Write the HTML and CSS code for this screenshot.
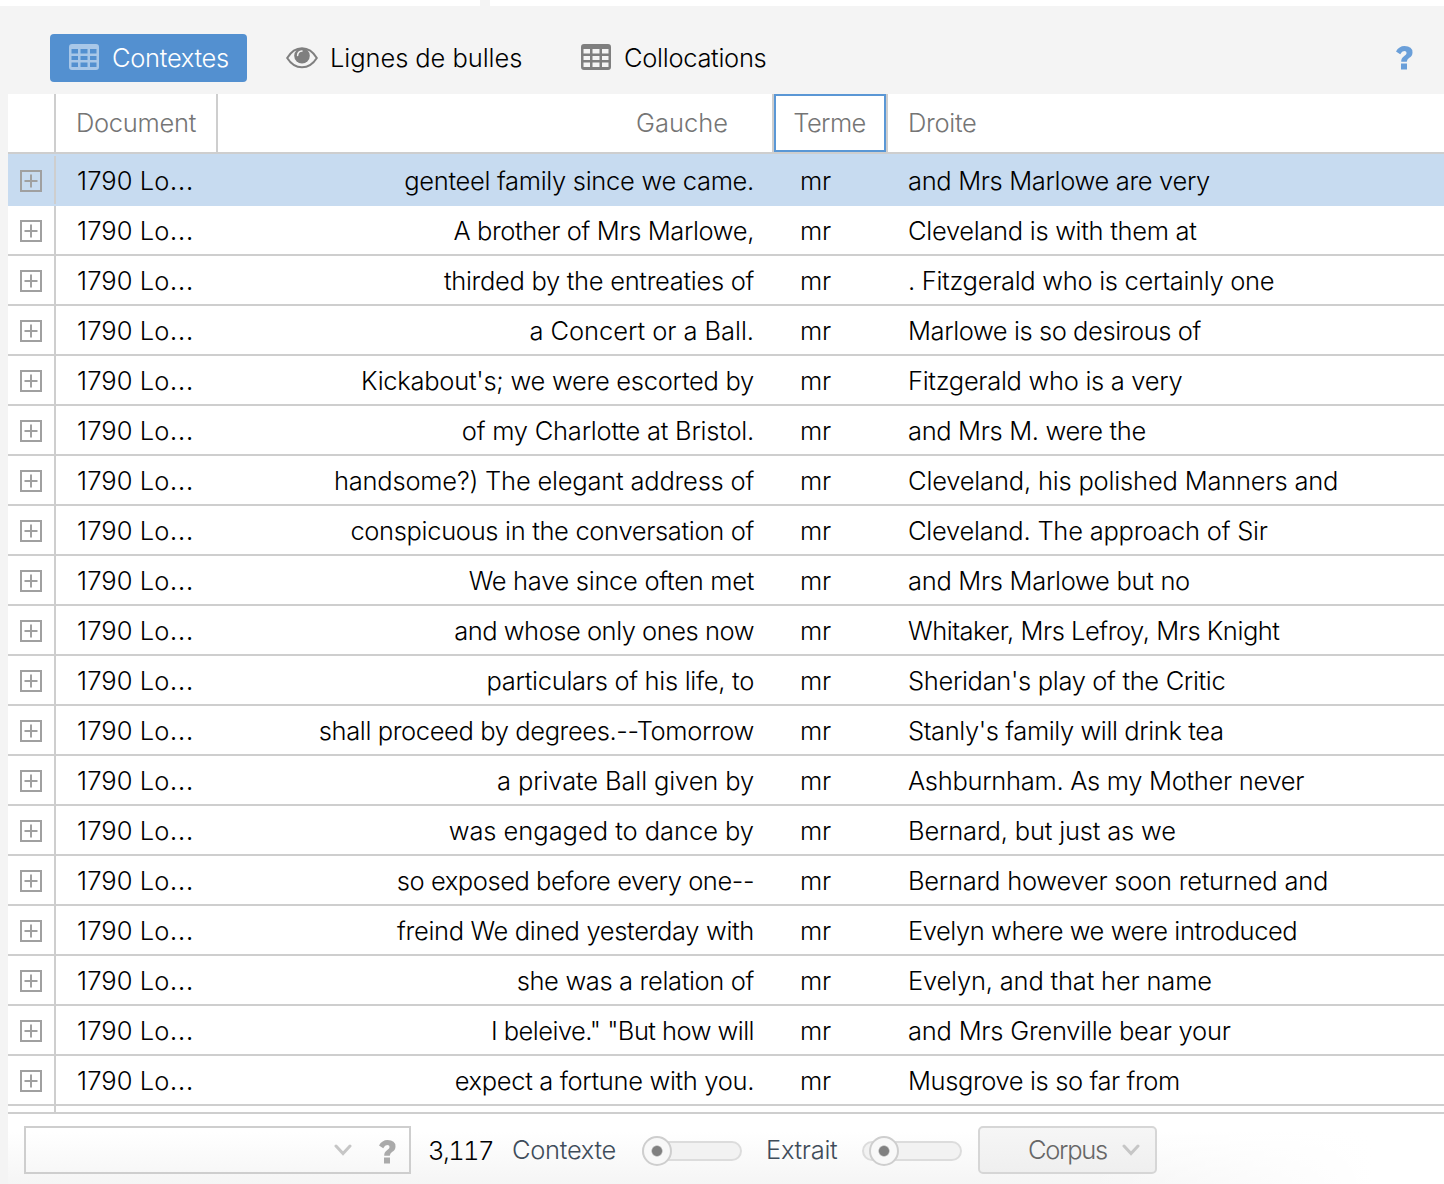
FILE: index.html
```
<!DOCTYPE html>
<html lang="fr">
<head>
<meta charset="utf-8">
<title>Contextes</title>
<link rel="stylesheet" href="styles.css">
</head>
<body>
<div class="splitter"><i></i><i></i></div>
<header class="tabs">
  <button class="tab active"><svg class="table-icon" viewBox="0 0 30 26"><path fill-rule="evenodd" d="M3 0H27Q30 0 30 3V23Q30 26 27 26H3Q0 26 0 23V3Q0 0 3 0ZM2.500 5V9.500H9V5ZM11.500 5V9.500H18.500V5ZM21 5V9.500H27.500V5ZM2.500 12V16H9V12ZM11.500 12V16H18.500V12ZM21 12V16H27.500V12ZM2.500 18.500V23H9V18.500ZM11.500 18.500V23H18.500V18.500ZM21 18.500V23H27.500V18.500Z"/></svg><span>Contextes</span></button>
  <button class="tab eye"><svg class="eye-icon" viewBox="0 0 32 22"><path d="M1.200 11Q7 1.200 16 1.200T30.800 11Q25 20.300 16 20.300T1.200 11Z" fill="none" stroke="#7f7f7f" stroke-width="2"/><circle cx="16" cy="8.700" r="7.800"/><path d="M11.600 8.500Q11.800 4.300 16 4" fill="none" stroke="#f4f4f4" stroke-width="1.500" stroke-linecap="round"/></svg><span>Lignes de bulles</span></button>
  <button class="tab coll"><svg class="table-icon" viewBox="0 0 30 26"><path fill-rule="evenodd" d="M3 0H27Q30 0 30 3V23Q30 26 27 26H3Q0 26 0 23V3Q0 0 3 0ZM2.500 5V9.500H9V5ZM11.500 5V9.500H18.500V5ZM21 5V9.500H27.500V5ZM2.500 12V16H9V12ZM11.500 12V16H18.500V12ZM21 12V16H27.500V12ZM2.500 18.500V23H9V18.500ZM11.500 18.500V23H18.500V18.500ZM21 18.500V23H27.500V18.500Z"/></svg><span>Collocations</span></button>
  <svg class="help" viewBox="0 0 17 24"><path d="M0 5.500Q3 0 8.500 0Q16.500 0 16.500 6.500Q16.500 10 13 12Q10.800 13.400 10.800 15.800H5.200Q5 12 8.300 9.900Q10.600 8.600 10.600 7Q10.600 5 8.300 5Q6 5 4.200 8.200ZM5 17.500H11V23.500H5Z"/></svg>
</header>
<main class="grid">
  <div class="head"><span class="exp"></span><span class="doc">Document</span><span class="left">Gauche</span><span class="term">Terme</span><span class="right">Droite</span></div>
  <div class="rows" id="rows"></div>
  <div class="partial"></div>
</main>
<footer class="bar">
  <div class="search"><svg class="chev" viewBox="0 0 18 12"><path d="M2 2L9 9.500L16 2"/></svg><svg class="qmark" viewBox="0 0 17 24"><path d="M0 5.500Q3 0 8.500 0Q16.500 0 16.500 6.500Q16.500 10 13 12Q10.800 13.400 10.800 15.800H5.200Q5 12 8.300 9.900Q10.600 8.600 10.600 7Q10.600 5 8.300 5Q6 5 4.200 8.200ZM5 17.500H11V23.500H5Z"/></svg></div>
  <span class="count">3,117</span>
  <span class="label ctx">Contexte</span>
  <div class="slider"><i></i></div>
  <span class="label ext">Extrait</span>
  <div class="slider second"><i></i></div>
  <button class="corpus"><span>Corpus</span><svg class="chev" viewBox="0 0 18 12"><path d="M2 2L9 9.500L16 2"/></svg></button>
</footer>
<script src="rows.js"></script>
</body>
</html>
```
FILE: rows.js
```
// [left context, right context, left tracking in px, right tracking in px]; tracking is spread over the whole text
const rows = [
  ["genteel family since we came.", "and Mrs Marlowe are very", 0, -1],
  ["A brother of Mrs Marlowe,", "Cleveland is with them at", -2, 0],
  ["thirded by the entreaties of", ". Fitzgerald who is certainly one", 0, 0],
  ["a Concert or a Ball.", "Marlowe is so desirous of", 5, -3],
  ["Kickabout's; we were escorted by", "Fitzgerald who is a very", 1, 0],
  ["of my Charlotte at Bristol.", "and Mrs M. were the", 2, -1],
  ["handsome?) The elegant address of", "Cleveland, his polished Manners and", 3, 4],
  ["conspicuous in the conversation of", "Cleveland. The approach of Sir", -1, 2],
  ["We have since often met", "and Mrs Marlowe but no", 0, 0],
  ["and whose only ones now", "Whitaker, Mrs Lefroy, Mrs Knight", -4, -5],
  ["particulars of his life, to", "Sheridan's play of the Critic", 0, -1],
  ["shall proceed by degrees.--Tomorrow", "Stanly's family will drink tea", -3, -3],
  ["a private Ball given by", "Ashburnham. As my Mother never", 4, 0],
  ["was engaged to dance by", "Bernard, but just as we", 6, 3],
  ["so exposed before every one--", "Bernard however soon returned and", -4, 2],
  ["freind We dined yesterday with", "Evelyn where we were introduced", -1, -4],
  ["she was a relation of", "Evelyn, and that her name", -1, 3],
  ["I beleive.\" \"But how will", "and Mrs Grenville bear your", -6, 2],
  ["expect a fortune with you.", "Musgrove is so far from", -1, -2]
];
const plus = '<svg class="plus" viewBox="0 0 22 22"><rect x="1" y="1" width="20" height="20"/><path d="M11 4.500V17.500M4.500 11H17.500"/></svg>';
const text = (value, extra) => `<b style="letter-spacing:${(-0.3 + extra / value.length).toFixed(3)}px">${value}</b>`;
document.getElementById("rows").innerHTML = rows.map(([left, right, l, r]) =>
  `<div class="row"><span class="exp">${plus}</span><span class="doc">1790 Lo<b>…</b></span><span class="left">${text(left, l)}</span><span class="term">mr</span><span class="right">${text(right, r)}</span></div>`
).join("");
```
FILE: styles.css
```
* { box-sizing: border-box; }
body { margin: 0; width: 1444px; height: 1184px; overflow: hidden; background: #f4f4f4; font: 300 25.5px/30px Inter, "Liberation Sans", sans-serif; letter-spacing: -0.3px; color: #000; white-space: nowrap; }
b { font-weight: 300; }
button { font: inherit; letter-spacing: inherit; border: 0; background: none; padding: 0; color: inherit; }
.splitter { display: flex; gap: 10px; height: 6px; }
.splitter i { background: #fff; width: 480px; }
.splitter i + i { flex: 1; }
.tabs { height: 88px; display: flex; align-items: center; padding: 16px 31px 0 50px; }
.tab { display: flex; align-items: center; height: 48px; fill: #7f7f7f; }
.active { width: 197px; padding-left: 19px; background: #5390d0; border-radius: 4px; color: #fff; fill: #a8c7e8; }
.table-icon { width: 30px; height: 26px; margin: -3px 13px 0 0; }
.eye { margin-left: 39px; width: 295px; letter-spacing: -0.07px; }
.eye-icon { width: 32px; height: 22px; margin-right: 12px; }
.help { width: 17px; height: 24px; fill: #6a9fd9; margin-left: auto; }
.grid { margin-left: 8px; background: #fff; }
.head, .row { display: grid; grid-template-columns: 48px 162px 554px 116px 1fr; align-items: center; }
.head { height: 60px; border-bottom: 2px solid #cecece; color: #757575; align-items: stretch; line-height: 58px; }
.head .exp, .head .doc { border-right: 2px solid #cecece; }
.head .doc { padding-left: 20px; }
.head .left { text-align: right; padding-right: 44px; letter-spacing: 0; }
.head .term { border: solid #cecece; border-width: 0 2px; box-shadow: inset 0 0 0 2px #5a97d5; text-align: center; padding-right: 1px; letter-spacing: -0.6px; }
.right { padding-left: 20px; }
.row { height: 50px; border-bottom: 2px solid #cecece; }
.row:first-child { height: 52px; background: #c7dbf0; border-color: #c7dbf0; padding-top: 2px; }
.row span:not(.exp) { padding-top: 2px; }
.row .exp { height: 48px; border-right: 2px solid #cecece; padding: 14px 0 0 12px; line-height: 0; }
.plus { width: 22px; height: 22px; fill: none; stroke: #a0a0a0; stroke-width: 2; }
.row .doc { padding-left: 21px; letter-spacing: 0.1px; }
.row .doc b { font-size: 28.5px; line-height: 1; }
.row .left { text-align: right; padding-right: 18px; }
.row .term { padding-left: 28px; }
.partial { height: 6px; width: 48px; border-right: 2px solid #cecece; }
.bar { margin-left: 8px; height: 72px; border-top: 2px solid #cecece; background: linear-gradient(90deg, transparent 75%, #fff 95%), linear-gradient(#fff 25%, #f5f5f5); display: flex; align-items: center; padding: 2px 0 0 16px; }
.search { width: 387px; height: 48px; border: 2px solid #cecece; display: flex; align-items: center; padding-left: 308px; }
.chev { width: 18px; height: 12px; fill: none; stroke: #c6c6c6; stroke-width: 3; stroke-linecap: round; }
.qmark { width: 17px; height: 24px; fill: #aaa; margin: 3px 0 0 27px; }
.count { width: 84px; padding-left: 17px; margin-top: 2px; font-variant-numeric: tabular-nums; letter-spacing: -1.6px; }
.label { color: #3f4c5a; }
.ctx { margin-left: 17px; width: 130px; }
.slider { width: 100px; height: 20px; margin-top: 1px; border: 2px solid #dcdcdc; border-radius: 10px; background: #f2f2f2; display: flex; align-items: center; }
.slider i { width: 30px; height: 30px; flex: none; margin-left: -2px; border: 2px solid #cecece; border-radius: 50%; background: radial-gradient(circle, #808080 0 4.500px, #f8f8f8 6px); }
.ext { margin-left: 24px; width: 96px; }
.second i { margin-left: 5px; }
.corpus { width: 179px; height: 48px; margin-left: 16px; border: 2px solid #d6d6d6; border-radius: 5px; background: linear-gradient(#f6f6f6, #efefef); color: #666; display: flex; align-items: center; padding-left: 48px; letter-spacing: -1.3px; }
.corpus span { width: 94px; text-align: left; }
```
